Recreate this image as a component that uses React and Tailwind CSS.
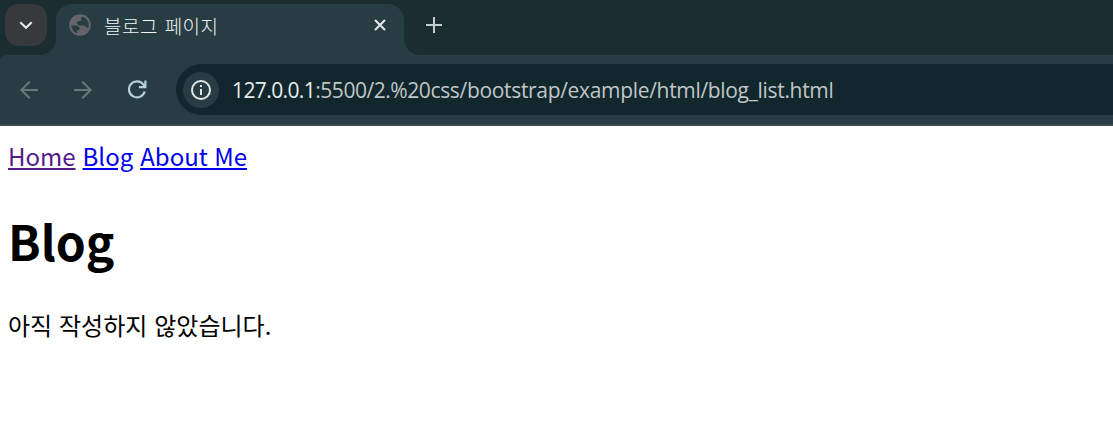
const stroke = { fill: 'none', strokeLinecap: 'butt', strokeLinejoin: 'miter' };

function TabStrip() {
  return (
    <div className="flex h-[55px] bg-[#1c2d31]">
      <div className="relative flex h-[55px] w-14 flex-col pl-[5px] pt-1">
        <button aria-label="Search tabs" className="flex h-[42px] w-[42px] items-center justify-center rounded-[14px] bg-[#373a3c]">
          <svg width="14" height="9" viewBox="0 0 14 9" {...stroke} stroke="#e3e8e8" strokeWidth="2.2">
            <path d="M1.3 1.3 7 6.8l5.700-5.500" />
          </svg>
        </button>
        <svg className="absolute bottom-0 right-0" width="16" height="16" viewBox="0 0 16 16" fill="#283d43">
          <path d="M16 0v16H0A16 16 0 0 0 16 0Z" />
        </svg>
        <svg className="absolute bottom-[-4px] left-0" width="8" height="4" viewBox="0 0 8 4" fill="#1c2d31">
          <path d="M0 0h8Q3 0 0 3Z" />
        </svg>
      </div>
      <div className="mt-1 flex h-[51px] w-[348px] rounded-t-[16px] bg-[#283d43] pl-[13px]">
        <svg className="mt-[10px] shrink-0" width="22" height="22" viewBox="0 0 22 22">
          <circle cx="11" cy="11" r="9.800" fill="none" stroke="#646569" strokeWidth="2" />
          <path fill="#646569" d="M13.500 1.500C6 0 .5 5 1.200 11.500h5.500c2.300 0 3.800 1.300 3.800 3.500v1.200H8v4.300c5 1.500 10-1 12.200-6l-3.200-1.500c-.7-1-1.500-1.500-3-1.500h-3.500c-1.500 0-2.500-1-2.500-2.400 0-1.300 1-2.100 2.500-2.100H12V5c0-1.200.5-2 1.500-2.400Z" />
        </svg>
        <span className="ml-[13px] mt-[10px] w-[270px] whitespace-nowrap font-['Noto_Sans_CJK_KR',sans-serif] text-[19px] font-light leading-6 tracking-[0.500px] text-[#f1f5f5] [word-spacing:2px]">블로그 페이지</span>
        <svg className="mt-[15px] shrink-0" width="12" height="12" viewBox="0 0 12 12" {...stroke} stroke="#e3e8e8" strokeWidth="2">
          <path d="m1 1 10 10M11 1 1 11" />
        </svg>
      </div>
      <svg className="mt-[39px]" width="16" height="16" viewBox="0 0 16 16" fill="#283d43">
        <path d="M0 0v16h16A16 16 0 0 1 0 0Z" />
      </svg>
      <svg className="ml-[6px] mt-[17px]" width="16" height="16" viewBox="0 0 16 16" {...stroke} stroke="#c4cccd" strokeWidth="2">
        <path d="M8 0v16M0 8h16" />
      </svg>
    </div>
  );
}

function Toolbar() {
  return (
    <div className="flex h-[71px] border-b-2 border-[#3b474b] bg-[#283d43] pt-[9px]">
      <div className="flex h-[51px] w-[176px] shrink-0 items-center pl-5">
        <svg width="18" height="18" viewBox="0 0 18 18" {...stroke} stroke="#68787d" strokeWidth="2">
          <path d="M18 9H1.500M9.700.700 1.400 9l8.300 8.300" />
        </svg>
        <svg className="ml-9" width="18" height="18" viewBox="0 0 18 18" {...stroke} stroke="#68787d" strokeWidth="2">
          <path d="M0 9h16.500M8.300.700 16.600 9l-8.300 8.300" />
        </svg>
        <svg className="ml-9" width="19" height="19" viewBox="0 0 19 19" {...stroke} stroke="#b4d0d5" strokeWidth="2.200">
          <path d="M16.700 11.500A8 8 0 1 1 15.500 4.700l2 2M17.400.500v6.600h-6.500" />
        </svg>
      </div>
      <div className="flex h-[51px] flex-1 items-center rounded-l-full bg-[#12272d] pl-[7px]">
        <div className="flex h-9 w-9 items-center justify-center rounded-full bg-[#283d43]">
          <svg width="20" height="20" viewBox="0 0 20 20" {...stroke} stroke="#e0e7e7" strokeWidth="2">
            <circle cx="10" cy="10" r="9" />
            <path d="M10 9v6M10 5v2" />
          </svg>
        </div>
        <span className="ml-[13px] whitespace-nowrap font-['Open_Sans',sans-serif] text-[21px] leading-7 text-[#c0c6c7]">
          <span className="tracking-[-0.600px] text-[#e6eded]">127.0.0.1</span>
          <span className="tracking-[-0.450px]">:5500/2.%20</span>
          <span className="tracking-[-0.320px]">css/bootstrap/example/html/blog_list.html</span>
        </span>
      </div>
    </div>
  );
}

export default function App() {
  return (
    <div className="h-[432px] w-full overflow-hidden bg-white font-['Noto_Sans_CJK_KR',sans-serif] text-black">
      <TabStrip />
      <Toolbar />
      <main className="px-2 pt-3">
        <nav className="flex gap-[7px] text-[24px] leading-9 text-[#0000ee]">
          <a href="#home" className="text-[#551a8b] underline">Home</a>
          <a href="#blog" className="underline">Blog</a>
          <a href="#about" className="underline [word-spacing:1px]">About Me</a>
        </nav>
        <h1 className="mt-[31px] text-[48px] font-bold leading-[70px]">Blog</h1>
        <p className="mt-8 text-[24px] leading-9 [word-spacing:1.500px]">아직 작성하지 않았습니다.</p>
      </main>
    </div>
  );
}
